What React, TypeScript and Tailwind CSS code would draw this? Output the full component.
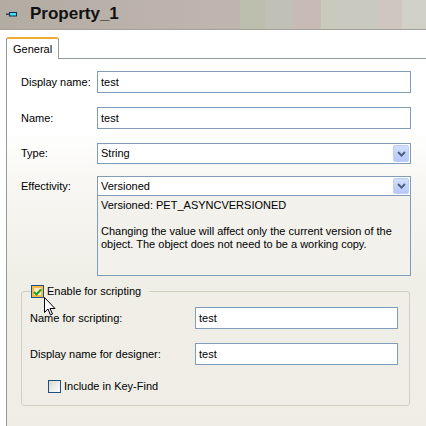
import React from "react";

const font = { fontFamily: '"Liberation Sans", Arial, sans-serif' };

function Chevron() {
  return (
    <svg width="9" height="6" viewBox="0 0 9 6">
      <path d="M1 1 L4.5 4.5 L8 1" fill="none" stroke="#4d6185" strokeWidth="2" />
    </svg>
  );
}

function DropBtn() {
  return (
    <div className="absolute right-[1px] top-[1px] bottom-[1px] w-[16px] flex items-center justify-center rounded-[2px] border border-[#bccffa] bg-[linear-gradient(to_bottom,#d2dffd,#b6c9f6)]">
      <Chevron />
    </div>
  );
}

function TextBox({ value, h = 22 }: { value: string; h?: number }) {
  return (
    <div
      className="flex-1 flex items-center border border-[#7f9db9] bg-white pl-[3px] text-[11px] text-black"
      style={{ height: h }}
    >
      {value}
    </div>
  );
}

function Row({ label, children, labelW = 76 }: { label: string; children: React.ReactNode; labelW?: number }) {
  return (
    <div className="flex items-center">
      <div className="text-[11px] text-black shrink-0" style={{ width: labelW }}>
        {label}
      </div>
      {children}
    </div>
  );
}

export default function App() {
  return (
    <div className="relative w-[426px] h-[426px] overflow-hidden bg-white flex flex-col" style={font}>
      {/* Header */}
      <div className="h-[30px] shrink-0 flex items-center border-b border-[#a3a196] bg-[linear-gradient(to_right,#b2aca2_0px,#bab1aa_120px,#c0b5ae_213px,#c0b5ae_240px,#bdbfae_240px,#bdbfae_265px,#c0c0b6_265px,#c0c0b6_294px,#c8bbb5_294px,#c8bbb5_321px,#c9cab9_321px,#c9cab9_335px,#c9c9bf_335px,#c9c9bf_378px,#d0c6c0_378px,#d0c6c0_402px,#d2d1c8_402px)]">
        <svg width="12" height="5" viewBox="0 0 12 5" className="ml-[5px] mt-[-1px]">
          <rect x="1" y="1.5" width="3" height="1.5" fill="#3a3a4a" />
          <rect x="4.5" y="0.5" width="7" height="3.5" fill="#40e0f0" stroke="#1a2a50" strokeWidth="1" />
        </svg>
        <span className="ml-[13px] text-[17px] font-bold text-[#111] leading-none mt-[-2px]">Property_1</span>
      </div>

      {/* Tabs */}
      <div className="flex items-end pl-[6px] mt-[7px] shrink-0">
        <div className="h-[22px] w-[53px] rounded-t-[3px] border-t-[2px] border-t-[#f0ac32] border-x border-x-[#919b9c] bg-white flex items-center pl-[6px] text-[11px] text-black">
          General
        </div>
        <div className="flex-1 h-[22px] border-b border-[#919b9c]" />
      </div>

      {/* Panel */}
      <div className="ml-[6px] flex-1 border-l border-[#919b9c] pl-[14px] pr-[15px] pt-[12px] bg-[linear-gradient(to_bottom,#ffffff_0px,#ffffff_70px,#f7f6f2_130px,#efeee7_220px,#efede6_367px)]">
        <Row label="Display name:">
          <TextBox value="test" />
        </Row>
        <div className="mt-[14px]">
          <Row label="Name:">
            <TextBox value="test" />
          </Row>
        </div>
        <div className="mt-[14px]">
          <Row label="Type:">
            <div className="relative flex-1 h-[21px] border border-[#7f9db9] bg-white flex items-center pl-[3px] text-[11px]">
              String
              <DropBtn />
            </div>
          </Row>
        </div>
        <div className="mt-[12px]">
          <Row label="Effectivity:">
            <div className="relative flex-1 h-[20px] border border-[#7f9db9] bg-white flex items-center pl-[3px] text-[11px]">
              Versioned
              <DropBtn />
            </div>
          </Row>
          <div className="ml-[76px] h-[80px] border-x border-b border-[#7f9db9] bg-[#f2f1ec] pl-[3px] pt-[3px] text-[11px] leading-[13px] text-black">
            <div>Versioned: PET_ASYNCVERSIONED</div>
            <div>&nbsp;</div>
            <div>Changing the value will affect only the current version of the</div>
            <div>object. The object does not need to be a working copy.</div>
          </div>
        </div>

        <fieldset className="mt-[9px] mr-[1px] rounded-[3px] border border-[#d0d0bf] pl-[8px] pr-[11px] pb-[10px]">
          <legend className="ml-[1px] pr-[8px] h-[13px] flex items-center">
            <span className="relative w-[13px] h-[13px] border border-[#1c5180] bg-white flex items-center justify-center">
              <span className="absolute inset-0 border-2 border-[#f8b84a] bg-[linear-gradient(135deg,#fce3a4,#fff)]" />
              <svg width="9" height="8" viewBox="0 0 9 8" className="relative">
                <path d="M1 4 L3.5 6.5 L8 1.5" fill="none" stroke="#21a121" strokeWidth="2" />
              </svg>
            </span>
            <span className="ml-[3px] text-[11px] text-black">Enable for scripting</span>
          </legend>
          <div className="mt-[9px]">
            <Row label="Name for scripting:" labelW={165}>
              <TextBox value="test" />
            </Row>
          </div>
          <div className="mt-[14px]">
            <Row label="Display name for designer:" labelW={165}>
              <TextBox value="test" />
            </Row>
          </div>
          <div className="mt-[13px] ml-[18px] flex items-center">
            <span className="w-[13px] h-[13px] border border-[#1c5180] bg-[linear-gradient(135deg,#d8d8d2,#ffffff)]" />
            <span className="ml-[3px] text-[11px] text-black">Include in Key-Find</span>
          </div>
        </fieldset>
      </div>

      {/* Mouse cursor */}
      <svg className="absolute left-[44px] top-[297px]" width="13" height="20" viewBox="0 0 13 20">
        <path d="M0.5 0.5 L0.5 15.5 L4 12 L6.5 18 L8.5 17 L6 11.5 L11 11.5 Z" fill="#fff" stroke="#000" strokeWidth="1" />
      </svg>
    </div>
  );
}
